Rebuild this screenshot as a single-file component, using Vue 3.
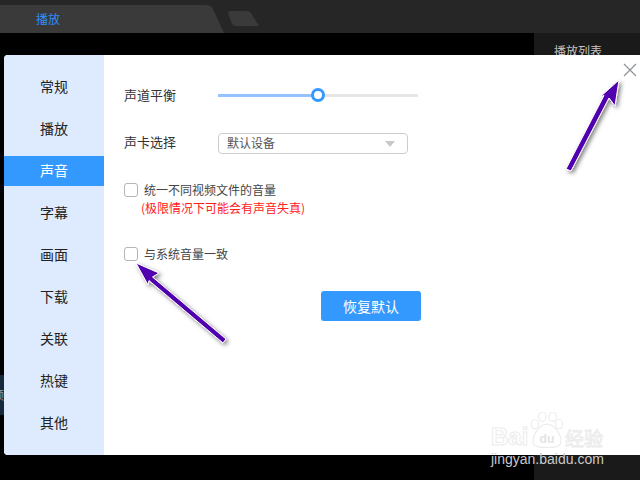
<script setup>
const navItems = [
  { label: '常规' }, { label: '播放' }, { label: '声音', active: true },
  { label: '字幕' }, { label: '画面' }, { label: '下载' },
  { label: '关联' }, { label: '热键' }, { label: '其他' }
]
</script>

<template>
  <div class="app">
    <header class="topbar">
      <svg class="tabs" width="270" height="33" viewBox="0 0 270 33">
        <path d="M0 5H206Q211 5 213 9L224 33H0Z" fill="#3a3a3a" />
        <path d="M228 13.500Q228 11 231 11H247Q250 11 251 13L259 26H236Q233 26 232 24Z" fill="#3a3a3a" />
      </svg>
      <span class="tab-label">播放</span>
    </header>
    <main class="main">
      <div class="stage"><div class="strip">频</div></div>
      <aside class="playlist"><span>播放列表</span></aside>
    </main>

    <section class="dialog">
      <nav class="nav">
        <div v-for="item in navItems" :key="item.label" class="nav-item">
          <span class="nav-text" :class="{ active: item.active }">{{ item.label }}</span>
        </div>
      </nav>
      <div class="content">
        <div class="row balance">
          <span class="row-label">声道平衡</span>
          <div class="slider"><div class="slider-fill"></div><div class="knob"></div></div>
        </div>
        <div class="row device">
          <span class="row-label lifted">声卡选择</span>
          <div class="select"><span>默认设备</span><i class="caret"></i></div>
        </div>
        <label class="check first"><i class="box"></i><span>统一不同视频文件的音量</span></label>
        <div class="warn">(极限情况下可能会有声音失真)</div>
        <label class="check second"><i class="box"></i><span>与系统音量一致</span></label>
        <button class="reset">恢复默认</button>
      </div>
      <svg class="close" width="14" height="14" viewBox="0 0 14 14">
        <path d="M1 1L13 13M13 1L1 13" stroke="#8a8f96" stroke-width="1.100" fill="none" />
      </svg>
    </section>

    <svg class="arrows" width="640" height="480" viewBox="0 0 640 480">
      <defs>
        <filter id="shadow" x="-30%" y="-30%" width="160%" height="160%">
          <feDropShadow dx="2" dy="2" stdDeviation="2" flood-color="#000" flood-opacity="0.5" />
        </filter>
      </defs>
      <g filter="url(#shadow)" stroke="#fff" stroke-width="1" stroke-linejoin="round">
        <path d="M619 80L615 106L609 98L571 171L566 169L604 95.500L600 97Z" fill="#5105b0" />
        <path d="M136 263L159 273L152.500 277L226 339L223 343L149 280.500L148 285Z" fill="#5105b0" />
      </g>
    </svg>

    <div class="watermark">
      <div class="wm-top">
        <span class="wm-bai">Bai</span>
        <svg class="paw" width="34" height="41" viewBox="0 0 36 44">
          <g fill="#fff" stroke="#ececec" stroke-width="1.200">
            <ellipse cx="5" cy="13" rx="4" ry="5" />
            <ellipse cx="13" cy="5" rx="4" ry="5" />
            <ellipse cx="24" cy="5" rx="4" ry="5" />
            <ellipse cx="31" cy="13" rx="4" ry="5" />
            <path d="M18 13C26 13 33 24 33 31C33 38 26 38 18 38C10 38 3 38 3 31C3 24 10 13 18 13Z" />
          </g>
          <text x="18" y="33" text-anchor="middle" class="wm-du">du</text>
        </svg>
        <span class="wm-cn">经验</span>
      </div>
      <div class="wm-url">jingyan.baidu.com</div>
    </div>
  </div>
</template>

<style scoped>
.app {
  position: relative;
  width: 640px;
  height: 480px;
  overflow: hidden;
  display: flex;
  flex-direction: column;
  background: #000;
  font-family: "Noto Sans CJK SC", "Liberation Sans", sans-serif;
}
.topbar {
  position: relative;
  height: 33px;
  flex: none;
  background: #262626;
}
.tabs { display: block; }
.tab-label {
  position: absolute;
  left: 36px;
  top: 11px;
  font-size: 12px;
  line-height: 16px;
  color: #2e8dff;
}
.main { flex: 1; display: flex; }
.stage { flex: 1; background: #000; padding-top: 342px; }
.strip {
  width: 4px;
  height: 40px;
  overflow: hidden;
  background: #16283c;
  color: #999;
  font-size: 12px;
  line-height: 40px;
  direction: rtl;
}
.playlist {
  width: 106px;
  flex: none;
  background: #1a1a1a;
  padding: 10px 0 0 20px;
  box-sizing: border-box;
  color: #c4c4c4;
  font-size: 12px;
  line-height: 16px;
}
.dialog {
  position: absolute;
  left: 4px;
  top: 55px;
  width: 636px;
  height: 400px;
  display: flex;
  background: #fff;
  border-radius: 4px 0 0 4px;
  overflow: hidden;
}
.nav {
  width: 100px;
  flex: none;
  background: #deebff;
  padding-top: 11px;
  box-sizing: border-box;
}
.nav-item {
  height: 42px;
  display: flex;
  align-items: center;
}
.nav-text {
  width: 100%;
  height: 30px;
  line-height: 29px;
  text-align: center;
  font-size: 14px;
  color: #222;
}
.nav-text.active { background: #3399ff; color: #fff; }
.content {
  flex: 1;
  padding-left: 20px;
  color: #444;
  position: relative;
}
.row { display: flex; align-items: center; }
.row-label { width: 94px; font-size: 13px; line-height: 20px; color: #333; }
.row-label.lifted { margin-bottom: 3px; }
.balance { margin-top: 30px; }
.slider {
  position: relative;
  width: 200px;
  height: 3px;
  background: #e6e6e6;
}
.slider-fill { width: 100px; height: 3px; background: #96c3ff; }
.knob {
  position: absolute;
  left: 93px;
  top: -5.500px;
  width: 14px;
  height: 14px;
  box-sizing: border-box;
  border: 3px solid #3399ff;
  border-radius: 50%;
  background: #fff;
}
.device { margin-top: 27px; }
.select {
  width: 190px;
  height: 21px;
  box-sizing: border-box;
  border: 1px solid #ccc;
  border-radius: 4px;
  padding: 0 12px 2px 8px;
  display: flex;
  align-items: center;
  justify-content: space-between;
  font-size: 12px;
  color: #555;
}
.caret {
  width: 0;
  height: 0;
  margin-top: 2px;
  border-left: 5.500px solid transparent;
  border-right: 5.500px solid transparent;
  border-top: 6px solid #c8c8cc;
}
.check {
  display: flex;
  align-items: center;
  gap: 6px;
  font-size: 12px;
  line-height: 16px;
  color: #444;
}
.check.first { margin-top: 27px; }
.check.second { margin-top: 30px; }
.box {
  width: 14px;
  height: 14px;
  box-sizing: border-box;
  border: 1px solid #b5b5b5;
  border-radius: 3px;
  background: #fff;
}
.warn {
  margin: 2px 0 0 17px;
  font-size: 12px;
  line-height: 16px;
  color: #ff2020;
}
.reset {
  display: block;
  margin: 29px 0 0 197px;
  width: 100px;
  height: 30px;
  border: none;
  border-radius: 3px;
  background: #3399ff;
  color: #fff;
  font: 14px "Noto Sans CJK SC", "Liberation Sans", sans-serif;
}
.close { position: absolute; right: 3px; top: 8px; }
.arrows { position: absolute; left: 0; top: 0; pointer-events: none; }
.watermark {
  position: absolute;
  left: 491px;
  top: 410px;
  width: 120px;
  pointer-events: none;
}
.wm-top { display: flex; align-items: flex-end; height: 40px; }
.wm-bai {
  font: bold 24px/26px "Liberation Sans", sans-serif;
  color: #fff;
  -webkit-text-stroke: 1px #ececec;
  width: 44px;
}
.paw { margin: 0 0 -3px -5px; flex: none; }
.wm-du { font: bold 13px "Liberation Sans", sans-serif; fill: #e4e4e4; stroke: none; }
.wm-cn {
  margin-left: 1px;
  font-size: 19px;
  line-height: 24px;
  color: #fff;
  -webkit-text-stroke: 1px #ececec;
}
.wm-url {
  font: 14px/16px "Liberation Sans", sans-serif;
  color: #c9c9c9;
  margin-top: 1px;
  white-space: nowrap;
}
</style>
